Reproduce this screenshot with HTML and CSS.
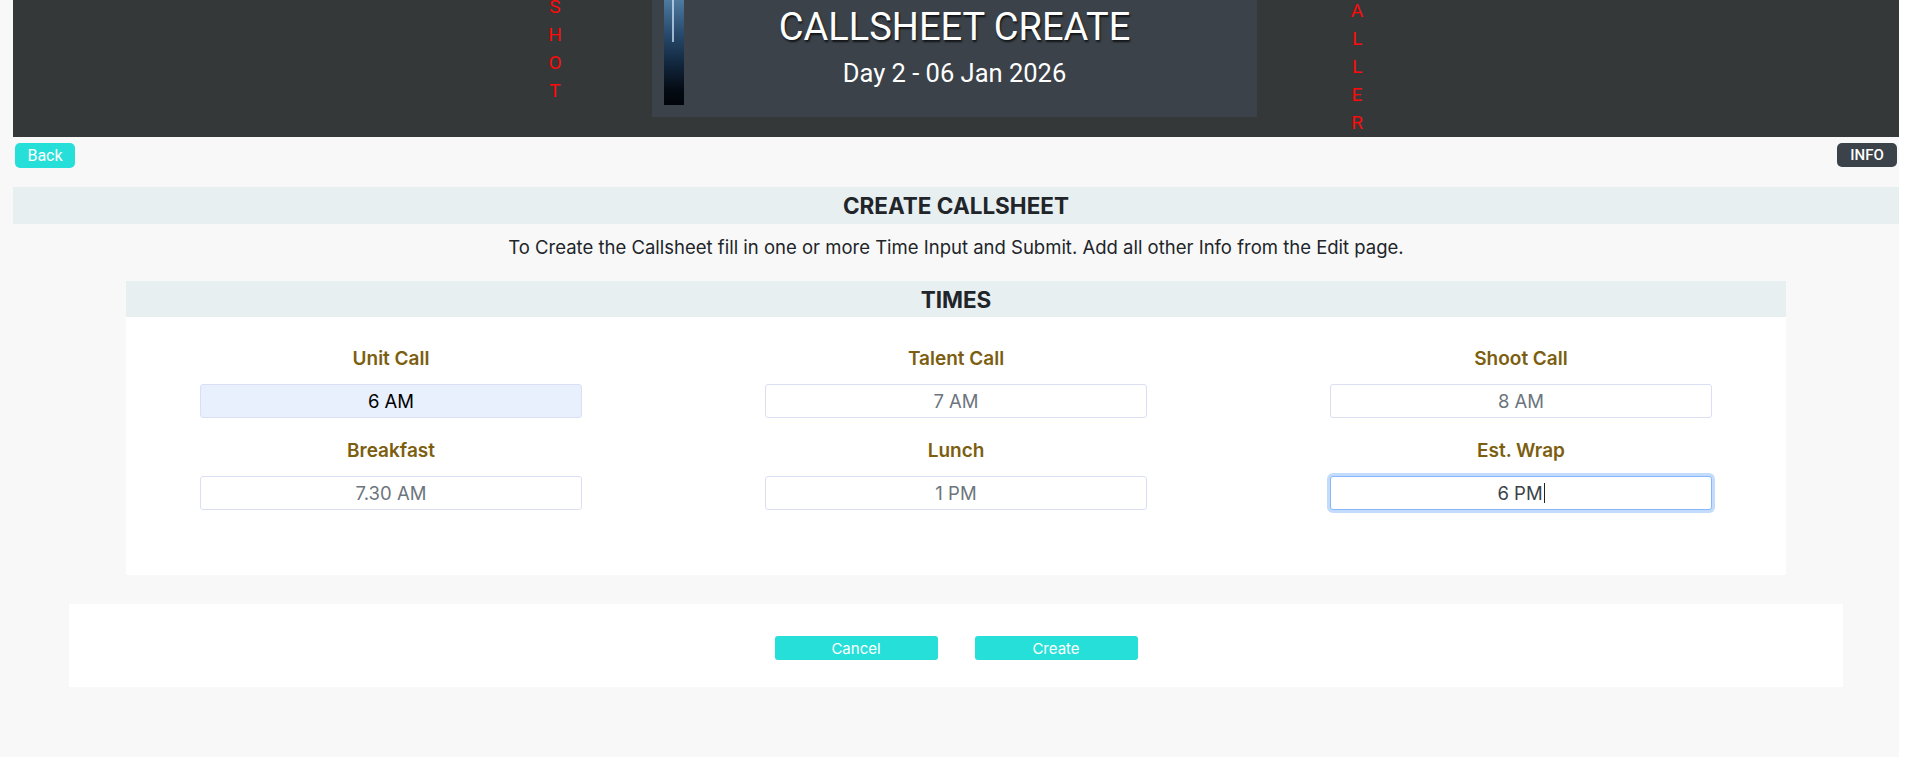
FILE: index.html
```html
<!DOCTYPE html>
<html lang="en">
<head>
<meta charset="utf-8">
<title>Callsheet Create</title>
<link rel="stylesheet" href="styles.css">
</head>
<body>
<div class="page">
  <header class="header">
    <div class="vtext vtext-left"><span>S</span><span>H</span><span>O</span><span>T</span></div>
    <div class="hero">
      <div class="poster"></div>
      <div class="hero-text">
        <h1 class="hero-title">CALLSHEET CREATE</h1>
        <div class="hero-sub">Day 2 - 06 Jan 2026</div>
      </div>
      <div></div>
    </div>
    <div class="vtext vtext-right"><span>A</span><span>L</span><span>L</span><span>E</span><span>R</span></div>
  </header>

  <div class="toolbar">
    <button class="btn-back">Back</button>
    <button class="btn-info">INFO</button>
  </div>

  <div class="band"><h2 class="band-title">CREATE CALLSHEET</h2></div>
  <p class="intro">To Create the Callsheet fill in one or more Time Input and Submit. Add all other Info from the Edit page.</p>

  <section class="times-card">
    <div class="times-band"><h3 class="times-title">TIMES</h3></div>
    <div class="times-grid">
      <div class="field">
        <label class="field-label">Unit Call</label>
        <input class="field-input autofill" type="text" value="6 AM">
      </div>
      <div class="field">
        <label class="field-label">Talent Call</label>
        <input class="field-input" type="text" placeholder="7 AM">
      </div>
      <div class="field">
        <label class="field-label">Shoot Call</label>
        <input class="field-input" type="text" placeholder="8 AM">
      </div>
      <div class="field">
        <label class="field-label">Breakfast</label>
        <input class="field-input" type="text" placeholder="7.30 AM">
      </div>
      <div class="field">
        <label class="field-label">Lunch</label>
        <input class="field-input" type="text" placeholder="1 PM">
      </div>
      <div class="field">
        <label class="field-label">Est. Wrap</label>
        <div class="field-input focused"><span>6 PM</span><span class="caret"></span></div>
      </div>
    </div>
  </section>

  <section class="actions">
    <button class="btn-action">Cancel</button>
    <button class="btn-action">Create</button>
  </section>
</div>
</body>
</html>
```

FILE: styles.css
```css
* { box-sizing: border-box; }

html, body {
  margin: 0;
  padding: 0;
  background: #ffffff;
}

body {
  font-family: "Inter", "Roboto", sans-serif;
  color: #212529;
}

.page {
  width: 1899px;
  min-height: 757px;
  background: #f8f8f8;
  padding-left: 13px;
}

/* Header */
.header {
  height: 137px;
  background: #343839;
  display: flex;
  justify-content: center;
  align-items: flex-start;
  overflow: hidden;
}

.vtext {
  width: 14px;
  display: flex;
  flex-direction: column;
  align-items: center;
  font-family: "Roboto", sans-serif;
  font-size: 19px;
  line-height: 28px;
  color: #ff0a0a;
}

.vtext-left { margin-top: -7px; }
.vtext-right { margin-top: -3px; }

.hero {
  width: 605px;
  height: 117px;
  margin: 0 93px 0 90px;
  background: #3b4249;
  padding: 0 12px;
  display: grid;
  grid-template-columns: 20px 1fr 20px;
}

.poster {
  width: 20px;
  height: 105px;
  background:
    linear-gradient(90deg, transparent 0 8px, rgba(210,230,250,0.7) 8px 10px, transparent 10px) top / 100% 40% no-repeat,
    linear-gradient(180deg, #4f7aa0 0%, #2a4d70 30%, #12283f 60%, #050b14 85%, #01050a 100%);
}

.hero-text {
  text-align: center;
  color: #ffffff;
  padding-top: 7px;
}

.hero-title {
  margin: 0;
  font-family: "Roboto", sans-serif;
  font-weight: 400;
  font-size: 38px;
  line-height: 40px;
  text-shadow: 1px 2px 2px rgba(0, 0, 0, 0.7);
}

.hero-sub {
  margin-top: 11px;
  font-family: "Roboto", sans-serif;
  font-size: 25.5px;
  line-height: 30px;
}

/* Toolbar */
.toolbar {
  display: flex;
  justify-content: space-between;
  padding: 0 2px;
  margin-top: 6px;
}

.btn-back,
.btn-info {
  height: 25px;
  border: none;
  border-radius: 5px;
  color: #ffffff;
  font-family: "Roboto", sans-serif;
  font-size: 16px;
  padding: 0;
}

.btn-back {
  width: 60px;
  background: #26dfd9;
}

.btn-info {
  width: 60px;
  height: 24px;
  background: #3b4249;
  font-size: 15px;
  font-weight: 500;
}

/* Band */
.band {
  margin-top: 19px;
  height: 37px;
  background: #e7eff1;
  display: flex;
  align-items: center;
  justify-content: center;
}

.band-title {
  margin: 0;
  font-size: 22.5px;
  font-weight: 700;
  color: #212529;
}

.intro {
  margin: 11px 0 0;
  text-align: center;
  font-size: 18.5px;
  line-height: 24px;
}

/* Times card */
.times-card {
  width: 1660px;
  margin: 22px auto 0;
  background: #ffffff;
}

.times-band {
  height: 36px;
  background: #e7eff1;
  display: flex;
  align-items: center;
  justify-content: center;
}

.times-title {
  margin: 0;
  font-size: 22.5px;
  font-weight: 700;
}

.times-grid {
  display: grid;
  grid-template-columns: repeat(3, 382px);
  justify-content: space-between;
  row-gap: 21px;
  padding: 30px 74px 65px;
}

.field {
  display: flex;
  flex-direction: column;
  align-items: center;
  gap: 13px;
}

.field-label {
  font-size: 19px;
  line-height: 24px;
  font-weight: 600;
  color: #7c5e10;
}

.field-input {
  width: 382px;
  height: 34px;
  border: 1px solid #dcdff4;
  border-radius: 3px;
  background: #ffffff;
  text-align: center;
  font-family: "Inter", "Roboto", sans-serif;
  font-size: 18.5px;
  color: #212529;
  padding: 0;
  outline: none;
}

.field-input::placeholder {
  color: #6c757d;
}

.field-input.autofill {
  background: #e8f0fe;
  color: #000000;
}

.field-input.focused {
  display: flex;
  align-items: center;
  justify-content: center;
  border-color: #86b7fe;
  box-shadow: 0 0 0 3px #c4dcfb;
  color: #3b4249;
}

.caret {
  width: 1px;
  height: 20px;
  background: #222222;
  margin-left: 1px;
}

/* Actions */
.actions {
  width: 1774px;
  height: 83px;
  margin: 29px auto 0;
  background: #ffffff;
  display: flex;
  justify-content: center;
  align-items: flex-start;
  gap: 37px;
  padding-top: 32px;
}

.btn-action {
  width: 163px;
  height: 24px;
  border: none;
  border-radius: 3px;
  background: #26dfd9;
  color: #ffffff;
  font-family: "Inter", sans-serif;
  font-size: 15px;
  padding: 0;
}
```
